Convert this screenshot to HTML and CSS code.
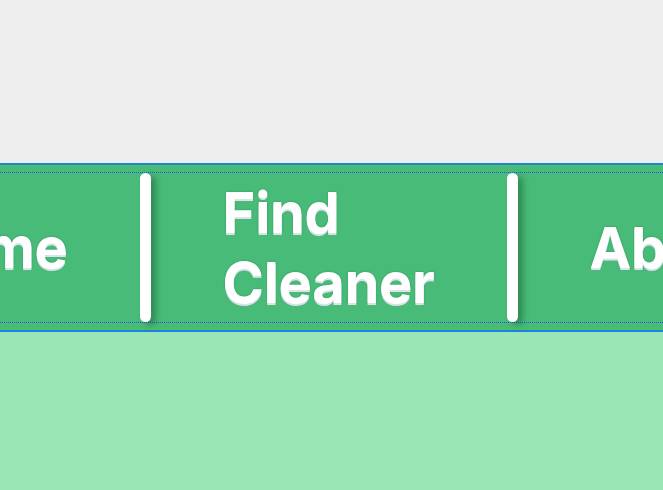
FILE: index.html
```html
<!DOCTYPE html>
<html lang="en">
<head>
<meta charset="utf-8">
<title>Nav</title>
<link rel="stylesheet" href="styles.css">
</head>
<body>
<div class="top"></div>
<header class="header">
  <div class="header-inner">
    <nav class="nav">
      <a class="nav-item" href="#">Home</a>
      <span class="sep"></span>
      <a class="nav-item" href="#">Find Cleaner</a>
      <span class="sep"></span>
      <a class="nav-item" href="#">About</a>
    </nav>
  </div>
</header>
</body>
</html>
```
FILE: styles.css
```css
html, body {
  margin: 0;
  padding: 0;
}
body {
  background: #9ae6b4;
  font-family: Inter, "Noto Sans", "Liberation Sans", sans-serif;
  overflow: hidden;
  height: 490px;
}
.top {
  height: 163px;
  background: #eeeeee;
}
.header {
  background: #48bb78;
  border-top: 2px solid #1a7ff0;
  border-bottom: 2px solid #1a7ff0;
}
.header-inner {
  border-top: 1px solid #52c738;
  border-bottom: 1px solid #52c738;
  padding: 6px 0;
}
.nav {
  display: flex;
  justify-content: center;
  align-items: stretch;
  gap: 72px;
  border-top: 1px dotted #2a52f0;
  border-bottom: 1px dotted #2a52f0;
  height: 149px;
}
.nav-item {
  display: flex;
  align-items: center;
  color: #ffffff;
  text-decoration: none;
  font-weight: 700;
  font-size: 56px;
  line-height: 70px;
  letter-spacing: -0.3px;
  white-space: normal;
  flex: 0 1 auto;
  width: min-content;
  padding-top: 1px;
  text-shadow: 0 2px 0 #dde1ec, 0 0 2px rgba(20, 120, 70, 0.6);
}
.sep {
  flex: 0 0 11px;
  width: 11px;
  background: #ffffff;
  border-radius: 6px;
  box-shadow: 5px 3px 6px rgba(0, 50, 20, 0.35);
}
```
